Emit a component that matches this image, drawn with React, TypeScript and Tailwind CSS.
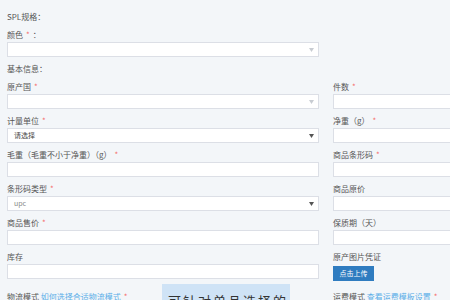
import React from 'react';

const Star = () => <span className="text-[#f56c6c] ml-[3px]">*</span>;

const Label = ({ children }: { children: React.ReactNode }) => (
  <div className="h-[12px] leading-[12px] text-[8px] text-[#555] whitespace-nowrap">{children}</div>
);

const Field = () => (
  <div className="mt-[1px] h-[15px] w-full border border-[#dcdfe6] bg-white" />
);

const Select = ({ value, filled = false }: { value?: string; filled?: boolean }) => (
  <div className="mt-[1px] h-[15px] w-full border border-[#dcdfe6] bg-white flex items-center justify-between pl-[6px] pr-[4px]">
    <span className={`text-[7px] ${value === 'upc' ? 'text-[#888]' : 'text-[#444]'}`}>{value}</span>
    <svg width="5" height="4" viewBox="0 0 5 4">
      <path d="M0 0 L5 0 L2.5 4 Z" fill={filled ? '#555' : '#c8ccd2'} />
    </svg>
  </div>
);

export default function App() {
  return (
    <div className="relative w-[450px] h-[300px] overflow-hidden bg-[#f3f6f9] font-['Noto_Sans_CJK_SC','Liberation_Sans',sans-serif]">
      <div className="pl-[7px] pt-[11px] w-[640px]">
        <div className="mb-[6px]">
          <Label>SPL规格：</Label>
        </div>

        <div className="w-[312px] mb-[6px]">
          <Label>
            颜色<Star />
            <span className="ml-[3px]">：</span>
          </Label>
          <Select />
        </div>

        <div className="mb-[6px]">
          <Label>基本信息：</Label>
        </div>

        <div className="grid grid-cols-[312px_312px] gap-x-[14px] gap-y-[6px]">
          <div>
            <Label>原产国<Star /></Label>
            <Select />
          </div>
          <div>
            <Label>件数<Star /></Label>
            <Field />
          </div>

          <div>
            <Label>计量单位<Star /></Label>
            <Select value="请选择" filled />
          </div>
          <div>
            <Label>净重（g）<Star /></Label>
            <Field />
          </div>

          <div>
            <Label>毛重（毛重不小于净重）（g）<Star /></Label>
            <Field />
          </div>
          <div>
            <Label>商品条形码<Star /></Label>
            <Field />
          </div>

          <div>
            <Label>条形码类型<Star /></Label>
            <Select value="upc" filled />
          </div>
          <div>
            <Label>商品原价</Label>
            <Field />
          </div>

          <div>
            <Label>商品售价<Star /></Label>
            <Field />
          </div>
          <div>
            <Label>保质期（天）</Label>
            <Field />
          </div>

          <div>
            <Label>库存</Label>
            <Field />
          </div>
          <div>
            <Label>原产图片凭证</Label>
            <button className="block mt-[3px] h-[15px] w-[41px] bg-[#2f7cc0] text-white text-[7px] leading-[15px]">
              点击上传
            </button>
          </div>

          <div className="mt-[4px]">
            <Label>
              物流模式 <span className="text-[#5aaee8]">如何选择合适物流模式</span><Star />
            </Label>
          </div>
          <div className="mt-[4px]">
            <Label>
              运费模式 <span className="text-[#5aaee8]">查看运费模板设置</span><Star />
            </Label>
          </div>
        </div>
      </div>

      <div className="absolute left-[162px] top-[284px] w-[128px] h-[30px] bg-[#cfe3f6] pl-[6px] pt-[10px] text-[13px] leading-[14px] tracking-[2px] text-[#333] whitespace-nowrap">
        可针对单品选择的
      </div>
    </div>
  );
}
